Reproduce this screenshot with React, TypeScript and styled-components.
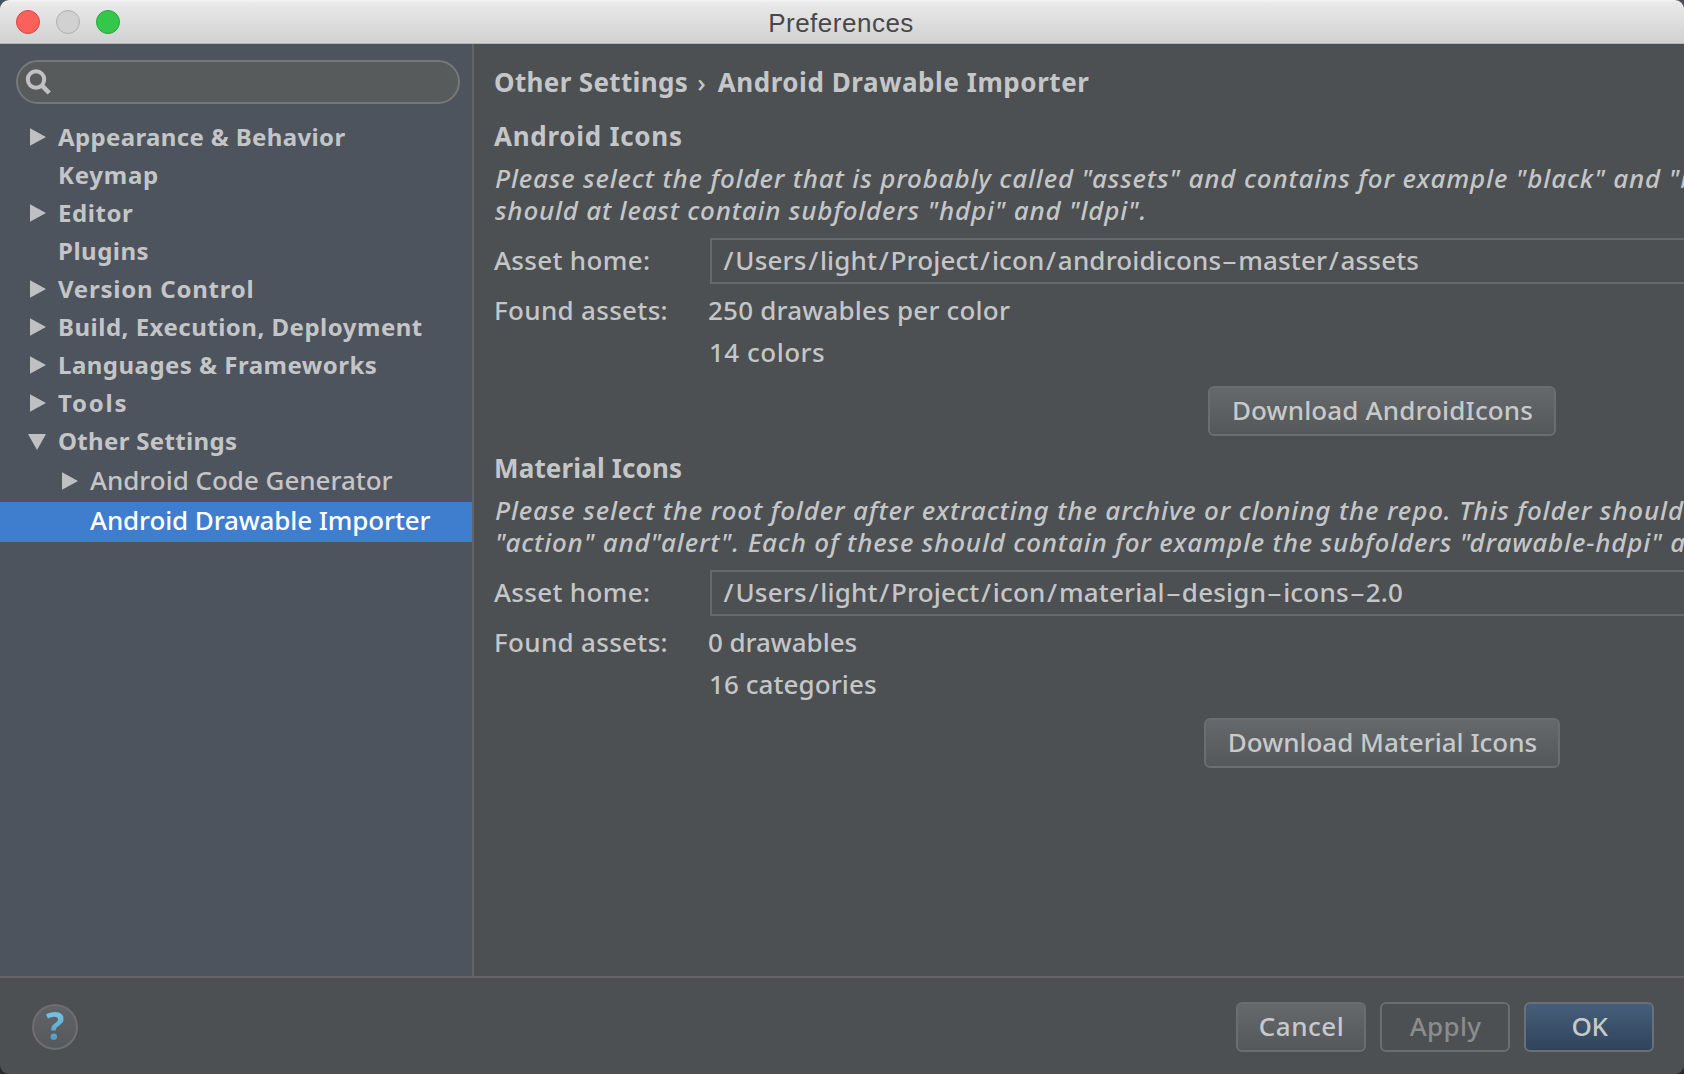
import React from 'react';
import styled, { createGlobalStyle } from 'styled-components';

const UI_FONT = '"Noto Sans", "Open Sans", sans-serif';

const GlobalStyle = createGlobalStyle`
  * { box-sizing: border-box; }
  body {
    margin: 0;
    background: linear-gradient(#46505f, #2b292d);
    overflow: hidden;
  }
`;

const Window = styled.div`
  display: flex;
  flex-direction: column;
  width: 1684px;
  height: 1074px;
  border-radius: 9px;
  overflow: hidden;
  background: #4c5052;
  color: #c5c6c7;
  font-family: ${UI_FONT};
  font-size: 26px;
  font-weight: 500;
  white-space: nowrap;
`;

const TitleBar = styled.header`
  display: grid;
  grid-template-columns: 1fr auto 1fr;
  align-items: center;
  flex: none;
  height: 44px;
  padding: 0 17px 0 16px;
  background: linear-gradient(#f4f4f4 0, #e9e9e9 3px, #d2d2d2 42px);
  border-bottom: 1px solid #b3b6b7;
`;

const Lights = styled.div`
  display: flex;
  gap: 16px;
`;

const Light = styled.span<{ $fill: string; $edge: string }>`
  width: 24px;
  height: 24px;
  border-radius: 50%;
  background: ${(p) => p.$fill};
  border: 1px solid ${(p) => p.$edge};
`;

const Title = styled.h1`
  margin: 0;
  padding: 2px 1px 0 0;
  font: 400 26px/42px "Liberation Sans", Arial, sans-serif;
  letter-spacing: 0.5px;
  color: #484848;
`;

const Body = styled.div`
  display: flex;
  flex: none;
  height: 934px;
  border-bottom: 2px solid #626465;
`;

const Sidebar = styled.nav`
  flex: none;
  width: 474px;
  background: #4e545e;
  border-right: 2px solid #626465;
`;

const SearchField = styled.div`
  display: flex;
  align-items: center;
  height: 44px;
  margin: 16px 12px 16px 16px;
  padding-left: 7px;
  border: 2px solid #74787a;
  border-radius: 22px;
  background: #575b5b;
`;

const TreeRow = styled.div<{ $nested?: boolean; $selected?: boolean }>`
  display: flex;
  align-items: flex-start;
  height: ${(p) => (p.$nested ? 40 : 38)}px;
  padding-left: ${(p) => (p.$nested ? 60 : 28)}px;
  background: ${(p) => (p.$selected ? '#3f7dcf' : 'transparent')};
  color: ${(p) => (p.$selected ? '#ffffff' : '#c4c5c6')};
`;

const ArrowSlot = styled.span<{ $nested?: boolean }>`
  display: flex;
  flex: none;
  width: 30px;
  padding-top: ${(p) => (p.$nested ? 10 : 8)}px;
`;

const TreeLabel = styled.span<{ $nested?: boolean; $track: number }>`
  font-size: ${(p) => (p.$nested ? 26 : 24)}px;
  font-weight: ${(p) => (p.$nested ? 500 : 700)};
  line-height: ${(p) => (p.$nested ? 36 : 34)}px;
  letter-spacing: ${(p) => p.$track}px;
`;

const Content = styled.main`
  flex: 1;
  min-width: 0;
  padding: 20px 0 0 20px;
  overflow: hidden;
`;

const Heading = styled.h2<{ $track: number }>`
  margin: 0;
  font-size: 26px;
  font-weight: 700;
  line-height: 36px;
  letter-spacing: ${(p) => p.$track}px;
`;

const Crumb = styled.span<{ $track: number }>`
  letter-spacing: ${(p) => p.$track}px;
`;

const Chevron = styled.span`
  margin: 0 12px 0 9px;
  font-weight: 500;
  letter-spacing: 0;
`;

const Section = styled.section<{ $first?: boolean }>`
  width: 1776px;
  padding-top: ${(p) => (p.$first ? 18 : 14)}px;
`;

const Description = styled.p`
  margin: 8px 0 12px;
  padding-left: 1px;
  font-style: italic;
  line-height: 32px;
`;

const DescriptionLine = styled.span<{ $track: number }>`
  display: block;
  letter-spacing: ${(p) => p.$track}px;
`;

const FormGrid = styled.div`
  display: grid;
  grid-template-columns: 216px 1fr;
  grid-template-rows: 48px 36px 36px;
  row-gap: 6px;
`;

const Label = styled.span<{ $tall?: boolean }>`
  line-height: ${(p) => (p.$tall ? 44 : 36)}px;
  letter-spacing: 0.32px;
`;

const PathField = styled.div<{ $track: number }>`
  height: 46px;
  padding-left: 10px;
  border: 2px solid #66696b;
  line-height: 40px;
  letter-spacing: ${(p) => p.$track}px;
`;

const Hyphen = styled.span`
  display: inline-block;
  width: 17px;
  text-align: center;
  letter-spacing: 0;
  transform: scaleX(1.9);
  font-weight: 400;
`;

const Slash = styled.span`
  margin: 0 1.6px;
`;

const Value = styled.span<{ $track: number; $shift: number }>`
  grid-column: 2;
  margin-left: ${(p) => p.$shift}px;
  line-height: 36px;
  letter-spacing: ${(p) => p.$track}px;
`;

const ButtonRow = styled.div`
  display: flex;
  justify-content: center;
  padding-top: 16px;
`;

type Kind = 'normal' | 'disabled' | 'primary';
const fills: Record<Kind, string> = {
  normal: 'linear-gradient(#65696b, #54585a)',
  disabled: 'transparent',
  primary: 'linear-gradient(#455f7b, #30435b)',
};

const Button = styled.button<{ $kind?: Kind; $width: number; $track: number }>`
  width: ${(p) => p.$width}px;
  height: 50px;
  padding: 0 0 2px 1px;
  border: 2px solid ${(p) => (p.$kind === 'primary' ? '#6a7079' : '#6a6e70')};
  border-radius: 6px;
  background: ${(p) => fills[p.$kind ?? 'normal']};
  background-clip: padding-box;
  color: ${(p) => (p.$kind === 'disabled' ? '#8a8c8d' : '#c8c9ca')};
  font: 500 26px/44px ${UI_FONT};
  letter-spacing: ${(p) => p.$track}px;
`;

const Footer = styled.footer`
  display: flex;
  align-items: flex-start;
  gap: 14px;
  flex: 1;
  padding: 24px 30px 0 32px;
`;

const HelpButton = styled.button`
  width: 46px;
  height: 46px;
  margin: 2px auto 0 0;
  padding: 0 0 4px;
  border: 2px solid #6d6f71;
  border-radius: 50%;
  background: linear-gradient(#606466, #56595b);
`;

const HelpMark = styled.span`
  display: block;
  font: 700 39px/38px ${UI_FONT};
  background: linear-gradient(#72bfe0 25%, #4f9bc8 90%);
  background-clip: text;
  -webkit-background-clip: text;
  color: transparent;
`;

function SearchIcon() {
  return (
    <svg width="28" height="28" viewBox="0 0 28 28" fill="none" stroke="#c0c1c2">
      <circle cx="11" cy="11.5" r="8.2" strokeWidth="4" />
      <path d="M16.8 17.3 L24.2 25" strokeWidth="4.6" />
    </svg>
  );
}

type ArrowState = 'open' | 'closed';

function Arrow({ state }: { state: ArrowState }) {
  return (
    <svg width="18" height="18" viewBox="0 0 18 18" fill="#bfc0c1">
      <path d={state === 'open' ? 'M0 2 H18 L9 18 Z' : 'M2 0.3 L18 9.1 L2 17.8 Z'} />
    </svg>
  );
}

interface Node {
  label: string;
  track: number;
  arrow?: ArrowState;
  nested?: boolean;
  selected?: boolean;
}

const tree: Node[] = [
  { label: 'Appearance & Behavior', track: 0.36, arrow: 'closed' },
  { label: 'Keymap', track: 0.75 },
  { label: 'Editor', track: 0.55, arrow: 'closed' },
  { label: 'Plugins', track: 0.5 },
  { label: 'Version Control', track: 0.75, arrow: 'closed' },
  { label: 'Build, Execution, Deployment', track: 0.5, arrow: 'closed' },
  { label: 'Languages & Frameworks', track: 0.48, arrow: 'closed' },
  { label: 'Tools', track: 1.8, arrow: 'closed' },
  { label: 'Other Settings', track: 0.33, arrow: 'open' },
  { label: 'Android Code Generator', track: -0.03, arrow: 'closed', nested: true },
  { label: 'Android Drawable Importer', track: -0.12, nested: true, selected: true },
];

interface TrackedText {
  text: string;
  track: number;
}

interface Stat extends TrackedText {
  shift: number;
}

interface AssetSection {
  title: string;
  titleTrack: number;
  description: TrackedText[];
  path: string;
  pathTrack: number;
  stats: Stat[];
  button: string;
  buttonWidth: number;
  buttonTrack: number;
}

const sections: AssetSection[] = [
  {
    title: 'Android Icons',
    titleTrack: 0.72,
    description: [
      {
        text: 'Please select the folder that is probably called "assets" and contains for example "black" and "b',
        track: 0.84,
      },
      { text: 'should at least contain subfolders "hdpi" and "ldpi".', track: 0.79 },
    ],
    path: '/Users/light/Project/icon/androidicons-master/assets',
    pathTrack: 0.16,
    stats: [
      { text: '250 drawables per color', track: 0.2, shift: -2 },
      { text: '14 colors', track: 0.5, shift: -1 },
    ],
    button: 'Download AndroidIcons',
    buttonWidth: 348,
    buttonTrack: 0.15,
  },
  {
    title: 'Material Icons',
    titleTrack: 0.15,
    description: [
      {
        text: 'Please select the root folder after extracting the archive or cloning the repo. This folder should',
        track: 0.86,
      },
      {
        text: '"action" and"alert". Each of these should contain for example the subfolders "drawable-hdpi" a',
        track: 0.83,
      },
    ],
    path: '/Users/light/Project/icon/material-design-icons-2.0',
    pathTrack: 0.2,
    stats: [
      { text: '0 drawables', track: -0.05, shift: -2 },
      { text: '16 categories', track: 0.08, shift: -1 },
    ],
    button: 'Download Material Icons',
    buttonWidth: 356,
    buttonTrack: 0,
  },
];

function Path({ text }: { text: string }) {
  return (
    <>
      {text.split(/([-/])/).map((part, i) => {
        if (part === '-') return <Hyphen key={i}>-</Hyphen>;
        if (part === '/') return <Slash key={i}>/</Slash>;
        return part;
      })}
    </>
  );
}

export default function App() {
  return (
    <>
      <GlobalStyle />
      <Window>
        <TitleBar>
          <Lights>
            <Light $fill="#fc605b" $edge="#dd4541" />
            <Light $fill="#d1d1d1" $edge="#b0b0b0" />
            <Light $fill="#34c84a" $edge="#24a838" />
          </Lights>
          <Title>Preferences</Title>
        </TitleBar>
        <Body>
          <Sidebar>
            <SearchField>
              <SearchIcon />
            </SearchField>
            {tree.map((n) => (
              <TreeRow key={n.label} $nested={n.nested} $selected={n.selected}>
                <ArrowSlot $nested={n.nested}>{n.arrow && <Arrow state={n.arrow} />}</ArrowSlot>
                <TreeLabel $nested={n.nested} $track={n.track}>
                  {n.label}
                </TreeLabel>
              </TreeRow>
            ))}
          </Sidebar>
          <Content>
            <Heading $track={0.5}>
              <Crumb $track={0.35}>Other Settings</Crumb>
              <Chevron>›</Chevron>
              <Crumb $track={0.56}>Android Drawable Importer</Crumb>
            </Heading>
            {sections.map((s, i) => (
              <Section key={s.title} $first={i === 0}>
                <Heading $track={s.titleTrack}>{s.title}</Heading>
                <Description>
                  {s.description.map((line) => (
                    <DescriptionLine key={line.text} $track={line.track}>
                      {line.text}
                    </DescriptionLine>
                  ))}
                </Description>
                <FormGrid>
                  <Label $tall>Asset home:</Label>
                  <PathField $track={s.pathTrack}>
                    <Path text={s.path} />
                  </PathField>
                  <Label>Found assets:</Label>
                  {s.stats.map((v) => (
                    <Value key={v.text} $track={v.track} $shift={v.shift}>
                      {v.text}
                    </Value>
                  ))}
                </FormGrid>
                <ButtonRow>
                  <Button $width={s.buttonWidth} $track={s.buttonTrack}>
                    {s.button}
                  </Button>
                </ButtonRow>
              </Section>
            ))}
          </Content>
        </Body>
        <Footer>
          <HelpButton>
            <HelpMark>?</HelpMark>
          </HelpButton>
          <Button $width={130} $track={0.5}>
            Cancel
          </Button>
          <Button $kind="disabled" $width={130} $track={0.3}>
            Apply
          </Button>
          <Button $kind="primary" $width={130} $track={-0.3}>
            OK
          </Button>
        </Footer>
      </Window>
    </>
  );
}
